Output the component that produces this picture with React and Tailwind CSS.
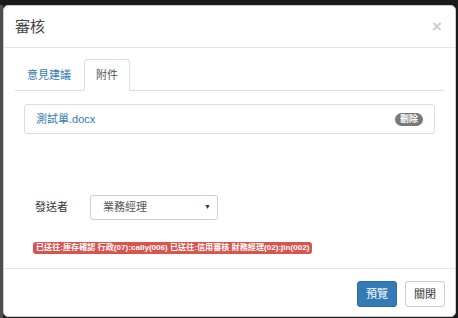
export default function App() {
  return (
    <div className="flex h-[318px] w-[458px] overflow-hidden bg-[#1b1b1b] font-['Liberation_Sans','Noto_Sans_CJK_TC',sans-serif] text-[#333]">
      <div className="mt-[5px] w-[3px] shrink-0 bg-[#4d4d4d]" />
      <div className="mt-[5px] flex h-[312px] w-[453px] shrink-0 flex-col rounded-[5px] border border-[#ccc] bg-white">
        {/* header */}
        <div className="flex h-[42px] items-center justify-between border-b border-[#e5e5e5] px-[11px]">
          <h4 className="text-[15px] leading-none text-[#444]">審核</h4>
          <button className="mr-[2px] text-[17px] font-bold leading-none text-black opacity-20">×</button>
        </div>

        {/* body */}
        <div className="flex-1 px-[11px] pt-[11px]">
          <ul className="flex border-b border-[#ddd]">
            <li className="-mb-px mr-px">
              <a className="block rounded-t-[3px] border border-transparent px-[11px] py-[7px] text-[11px] leading-[16px] text-[#337ab7]">
                意見建議
              </a>
            </li>
            <li className="-mb-px">
              <a className="block rounded-t-[3px] border border-[#ddd] border-b-white bg-white px-[11px] py-[7px] text-[11px] leading-[16px] text-[#555]">
                附件
              </a>
            </li>
          </ul>

          <div className="mx-[9px] mt-[13px] flex h-[30px] items-center justify-between rounded-[3px] border border-[#ddd] px-[11px]">
            <a className="text-[11px] text-[#337ab7]">測試單.docx</a>
            <span className="rounded-[8px] bg-[#777] px-[5px] py-[1px] text-[9px] font-bold leading-[11px] text-white">
              刪除
            </span>
          </div>

          <div className="mt-[61px] flex items-center pl-[20px]">
            <label className="w-[55px] text-[11px]">發送者</label>
            <div className="flex h-[25px] w-[128px] items-center justify-between rounded-[3px] border border-[#ccc] pl-[12px] pr-[6px]">
              <span className="text-[11px] text-[#555]">業務經理</span>
              <span className="text-[7px] text-[#333]">▼</span>
            </div>
          </div>

          <div className="mt-[13px] pl-[18px]">
            <span className="inline-block rounded-[3px] bg-[#d9534f] px-[3px] text-[8.1px] font-bold leading-[12px] text-white">
              已送往:庫存確認 行政(07):cally(006) 已送往:信用審核 財務經理(02):jin(002)
            </span>
          </div>
        </div>

        {/* footer */}
        <div className="flex justify-end gap-[8px] border-t border-[#e5e5e5] px-[10px] pb-[9px] pt-[12px]">
          <button className="h-[26px] w-[40px] rounded-[3px] border border-[#2e6da4] bg-[#337ab7] text-[11px] text-white">
            預覽
          </button>
          <button className="h-[26px] w-[40px] rounded-[3px] border border-[#ccc] bg-white text-[11px] text-[#333]">
            關閉
          </button>
        </div>
      </div>
      <div className="flex-1 bg-[#1b1b1b]" />
    </div>
  );
}
